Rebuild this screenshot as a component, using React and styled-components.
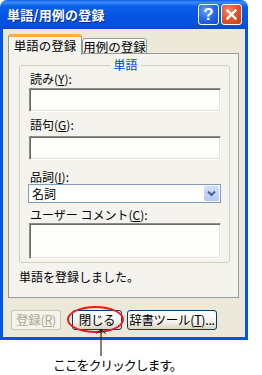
import React from "react";
import styled, { createGlobalStyle } from "styled-components";

const GlobalStyle = createGlobalStyle`
    html, body {
        margin: 0;
        padding: 0;
        background: #ffffff;
    }
    body {
        font-family: "Noto Sans CJK JP", "Noto Sans", sans-serif;
        font-size: 12px;
        color: #000;
    }
    * {
        box-sizing: border-box;
    }
`;

const Page = styled.div`
    width: 262px;
    height: 375px;
    display: flex;
    flex-direction: column;
    background: #fff;
    overflow: hidden;
`;

const Window = styled.div`
    width: 248px;
    height: 340px;
    display: flex;
    flex-direction: column;
`;

const TitleBar = styled.div`
    height: 29px;
    flex-shrink: 0;
    display: flex;
    align-items: center;
    justify-content: space-between;
    padding: 0 6px 0 7px;
    border-radius: 7px 7px 0 0;
    background: linear-gradient(
        to bottom,
        #0a5ee8 0%,
        #3d8cf7 8%,
        #0a60ea 22%,
        #0454e3 55%,
        #0551e0 85%,
        #0a46c8 100%
    );
`;

const Title = styled.span`
    color: #fff;
    font-size: 13px;
    font-weight: bold;
    letter-spacing: 0.2px;
    text-shadow: 1px 1px 0 #0a2a8a;
    line-height: 16px;
`;

const TitleButtons = styled.div`
    display: flex;
    gap: 2px;
`;

const CaptionButton = styled.div`
    width: 21px;
    height: 21px;
    border: 1px solid #fff;
    border-radius: 3px;
    display: flex;
    align-items: center;
    justify-content: center;
    color: #fff;
    font-family: "Liberation Sans", Arial, sans-serif;
    font-weight: bold;
    font-size: 17px;
    background: ${(p) =>
        p.$close
            ? "radial-gradient(circle at 35% 30%, #f08a6a 0%, #e2572f 45%, #c93b14 100%)"
            : "radial-gradient(circle at 35% 30%, #6aa2ff 0%, #2a6cf0 45%, #1348cf 100%)"};
`;

const Body = styled.div`
    flex: 1;
    display: flex;
    flex-direction: column;
    background: #ece9d8;
    border: 3px solid #0553e2;
    border-top: none;
    padding: 5px 0 0 5px;
`;

const TabRow = styled.div`
    display: flex;
    align-items: flex-end;
    height: 20px;
`;

const Tab = styled.div`
    position: relative;
    z-index: ${(p) => (p.$active ? 2 : 1)};
    height: ${(p) => (p.$active ? "21px" : "16px")};
    width: ${(p) => p.$width}px;
    display: flex;
    align-items: center;
    justify-content: center;
    line-height: 14px;
    font-size: 12.5px;
    border: 1px solid #919b9c;
    border-bottom: ${(p) => (p.$active ? "none" : "1px solid #919b9c")};
    border-top: ${(p) => (p.$active ? "3px solid #f5b33c" : "1px solid #919b9c")};
    border-radius: 3px 3px 0 0;
    background: ${(p) =>
        p.$active ? "#f4f3ee" : "linear-gradient(to bottom, #ffffff, #ecebe4)"};
    padding-top: ${(p) => (p.$active ? "0" : "1px")};
    margin-bottom: ${(p) => (p.$active ? "-1px" : "0")};
`;

const Panel = styled.div`
    width: 231px;
    height: 245px;
    margin-top: -1px;
    border: 1px solid #919b9c;
    background: #f4f3ee;
    padding: 11px 0 0 10px;
    display: flex;
    flex-direction: column;
`;

const GroupBox = styled.div`
    width: 211px;
    border: 1px solid #d0d0bf;
    border-radius: 3px;
    padding: 0 7px 3px 9px;
    display: flex;
    flex-direction: column;
`;

const Legend = styled.div`
    align-self: center;
    margin-top: -8px;
    padding: 0 3px;
    line-height: 14px;
    background: #f4f3ee;
    color: #0046d5;
`;

const Label = styled.div`
    margin-top: ${(p) => p.$top || 0}px;
    padding-left: 1px;
    line-height: 14px;
    white-space: nowrap;
    span {
        text-decoration: underline;
    }
`;

const Sunken = styled.div`
    width: 192px;
    height: ${(p) => p.$height}px;
    margin-top: ${(p) => p.$top || 0}px;
    background: #fdfdfb;
    border: 1px solid;
    border-color: #8c8c88 #ffffff #ffffff #8c8c88;
    box-shadow: inset 1px 1px 0 #6c6c68, inset -1px -1px 0 #e4e2d6;
`;

const Combo = styled.div`
    width: 193px;
    height: 19px;
    margin-left: -1px;
    background: #fff;
    border: 1px solid #7f9db9;
    display: flex;
    align-items: center;
    justify-content: space-between;
    padding: 1px 1px 1px 3px;
    line-height: 14px;
`;

const ComboButton = styled.div`
    width: 15px;
    height: 15px;
    border-radius: 2px;
    background: linear-gradient(to bottom, #d0dffc, #b4c9f6);
    display: flex;
    align-items: center;
    justify-content: center;
`;

const Status = styled.div`
    margin-top: 7px;
    line-height: 14px;
`;

const ButtonRow = styled.div`
    display: flex;
    align-items: center;
    margin-top: 12px;
    padding-left: 3px;
`;

const Button = styled.div`
    position: relative;
    width: ${(p) => p.$width}px;
    height: 20px;
    margin-right: ${(p) => p.$gap || 0}px;
    border: 1px solid ${(p) => (p.$disabled ? "#c9c7ba" : "#003c74")};
    border-radius: 3px;
    background: ${(p) =>
        p.$disabled
            ? "#f5f4ea"
            : "linear-gradient(to bottom, #ffffff 0%, #f3f2ec 60%, #d8d4c6 100%)"};
    color: ${(p) => (p.$disabled ? "#aca899" : "#000")};
    display: flex;
    align-items: center;
    justify-content: center;
    line-height: 14px;
    font-size: 12.5px;
    white-space: nowrap;
    letter-spacing: -0.3px;
`;

const Ring = styled.div`
    position: absolute;
    left: -6px;
    right: -3px;
    top: -5px;
    bottom: -4px;
    border: 2.5px solid #ec1a22;
    border-radius: 50%;
    pointer-events: none;
`;

const Pointer = styled.svg`
    position: absolute;
    left: 22px;
    top: 18px;
    overflow: visible;
`;

const Caption = styled.div`
    margin-top: 17px;
    padding-left: 53px;
    line-height: 15px;
    font-size: 13px;
    letter-spacing: -1.2px;
`;

const App = () => {
    return (
        <>
            <GlobalStyle />
            <Page>
                <Window>
                    <TitleBar>
                        <Title>単語/用例の登録</Title>
                        <TitleButtons>
                            <CaptionButton>?</CaptionButton>
                            <CaptionButton $close>
                                <svg width="11" height="11" viewBox="0 0 11 11">
                                    <path d="M1.5 1.5 L9.5 9.5 M9.5 1.5 L1.5 9.5" stroke="#fff" strokeWidth="2.4" strokeLinecap="square" />
                                </svg>
                            </CaptionButton>
                        </TitleButtons>
                    </TitleBar>
                    <Body>
                        <TabRow>
                            <Tab $active $width={74}>単語の登録</Tab>
                            <Tab $width={65}>用例の登録</Tab>
                        </TabRow>
                        <Panel>
                            <GroupBox>
                                <Legend>単語</Legend>
                                <Label>読み(<span>Y</span>):</Label>
                                <Sunken $height={24} $top={2} />
                                <Label $top={6}>語句(<span>G</span>):</Label>
                                <Sunken $height={24} $top={4} />
                                <Label $top={10}>品詞(<span>I</span>):</Label>
                                <Combo>
                                    名詞
                                    <ComboButton>
                                        <svg width="9" height="7" viewBox="0 0 9 7">
                                            <path d="M1 1.5 L4.5 5 L8 1.5" stroke="#4d6185" strokeWidth="2" fill="none" />
                                        </svg>
                                    </ComboButton>
                                </Combo>
                                <Label $top={5}>ユーザー コメント(<span>C</span>):</Label>
                                <Sunken $height={36} $top={1} />
                            </GroupBox>
                            <Status>単語を登録しました。</Status>
                        </Panel>
                        <ButtonRow>
                            <Button $disabled $width={50} $gap={11}>登録(<u>R</u>)</Button>
                            <Button $width={50} $gap={5}>
                                閉じる
                                <Ring />
                                <Pointer width="12" height="32" viewBox="0 0 12 32">
                                    <path d="M6 0 L6 27" stroke="#000" strokeWidth="1" />
                                    <path d="M1.5 4.5 L6 0.5 L10.5 4.5" stroke="#000" strokeWidth="1" fill="none" />
                                </Pointer>
                            </Button>
                            <Button $width={90}>辞書ツール(<u>T</u>)...</Button>
                        </ButtonRow>
                    </Body>
                </Window>
                <Caption>ここをクリックします。</Caption>
            </Page>
        </>
    );
};

export default App;
